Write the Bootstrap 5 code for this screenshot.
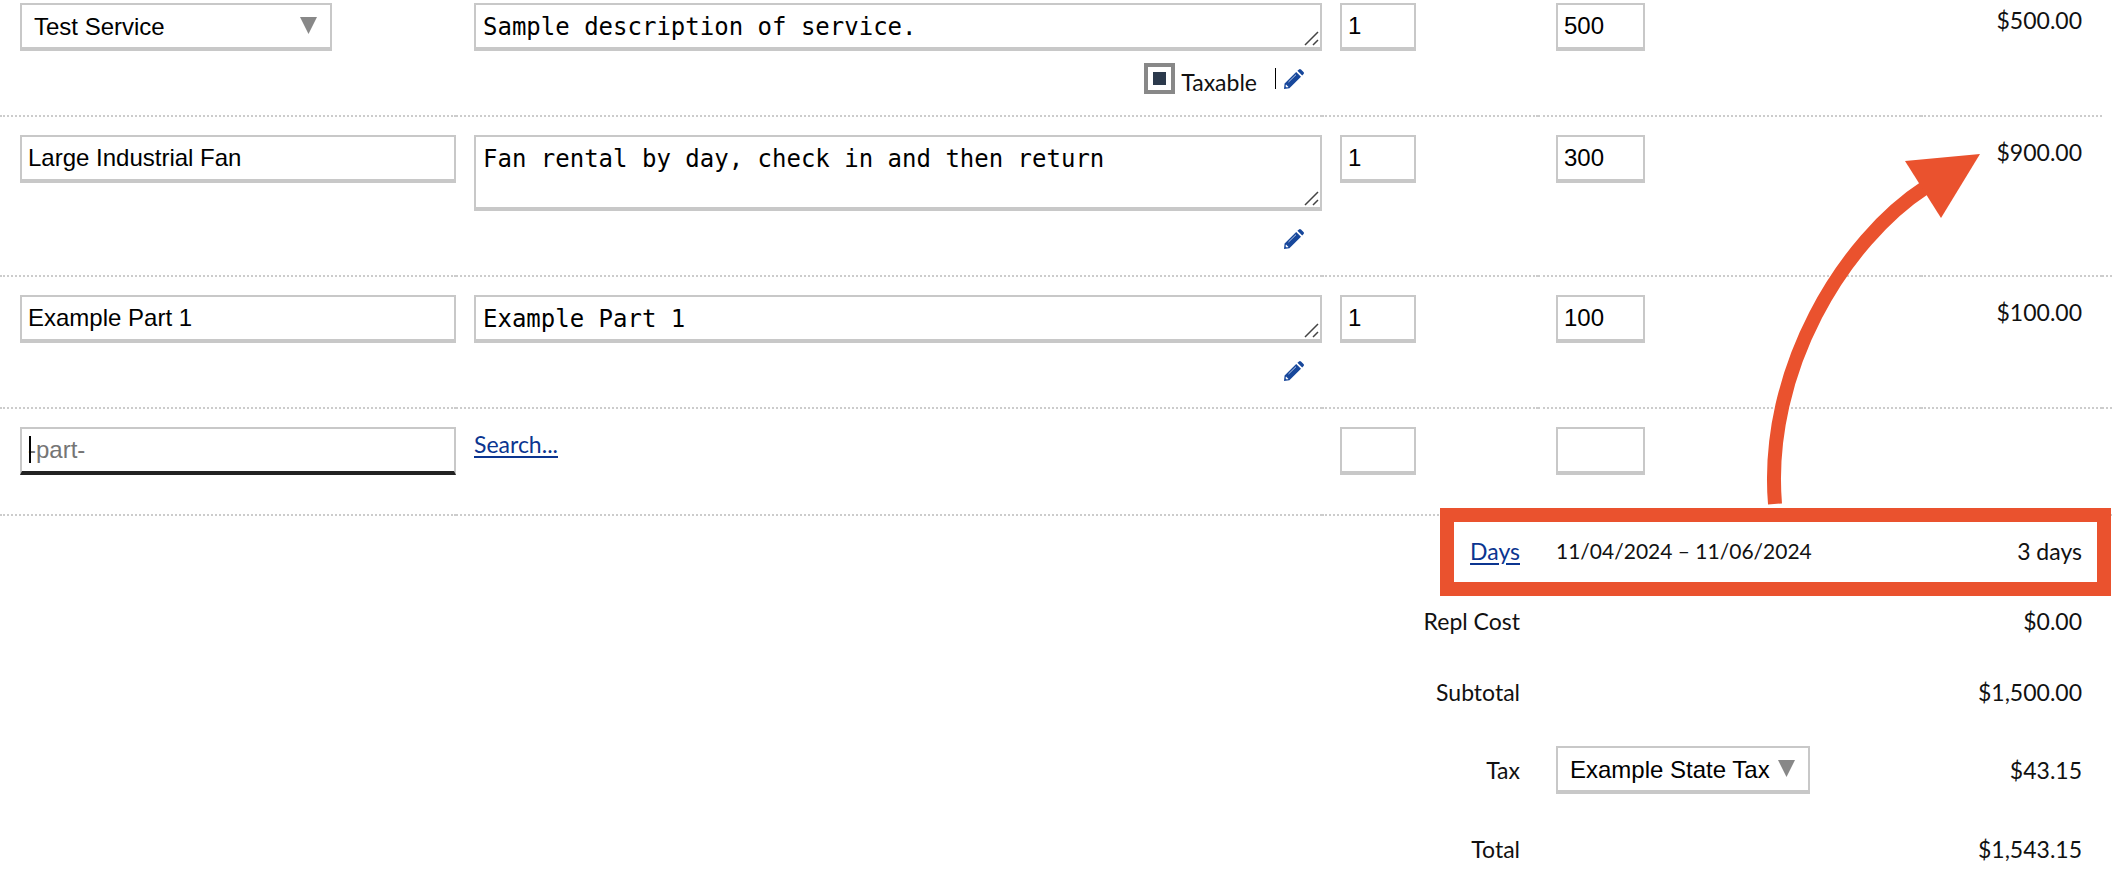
<!DOCTYPE html>
<html lang="en">
<head>
<meta charset="utf-8">
<meta name="viewport" content="width=device-width, initial-scale=1">
<title>Invoice line items</title>
<link href="https://cdn.jsdelivr.net/npm/bootstrap@5.3.0/dist/css/bootstrap.min.css" rel="stylesheet">
<style>
body { background: #fff; color: #111; font: 23px/34px Lato, "Open Sans", sans-serif; }
a { color: #0b3590; text-decoration: underline; text-decoration-thickness: 2px; text-underline-offset: 3px; }
.invoice { table-layout: fixed; border-collapse: collapse; }
.col-item { width: 456px; }
.col-qty { width: 216px; }
.col-price { width: 383px; }
.col-amount { width: 181px; }
.col-edge { width: 10px; }
.invoice td, .invoice th { vertical-align: top; font-weight: 400; padding: 18px 0 18px 18px; }
.invoice td:first-child { padding-left: 20px; }
.lines td { border-bottom: 2px dotted #ccc; padding-bottom: 21px; }
.lines tr:first-child td { padding-top: 3px; }
.lines .blank-line td { padding-bottom: 39px; }
.invoice .amount { text-align: right; padding-left: 0; padding-right: 20px; }
.invoice .edge { padding-left: 0; }
.invoice .period { font-size: 21px; }
.totals th { text-align: right; padding-right: 18px !important; }
.totals th, .totals td { height: 71px; }
.totals .tax-line > * { vertical-align: middle; padding-bottom: 20px; }
.totals .last-line > * { padding-bottom: 0; height: 52px; }

.field { border: 2px solid #c8c8c8; border-bottom-width: 4px; border-radius: 0; background-color: #fff; color: #000; font: 24px/28px "Liberation Sans", Arial, sans-serif; height: 48px; padding: 0 6px; }
.field::placeholder { color: #757575; opacity: 1; }
.field.focused { border-bottom: 4px solid #222; }
.qty { width: 76px; }
.price { width: 89px; }
textarea.field { display: block; height: auto; min-height: 48px; padding: 8px 6px 6px 7px; resize: none; overflow: hidden; font-family: "DejaVu Sans Mono", monospace;
  background: #fff url("data:image/svg+xml,%3Csvg xmlns='http://www.w3.org/2000/svg' width='16' height='16'%3E%3Cpath d='M1 14L14 1M9 14L14 9' stroke='%23444' stroke-width='1.5'/%3E%3C/svg%3E") no-repeat right bottom; }
select.field { appearance: none; padding-left: 12px; padding-top: 2px;
  background: #fff url("data:image/svg+xml,%3Csvg xmlns='http://www.w3.org/2000/svg' width='17' height='17'%3E%3Cpath d='M0 0H17L8.500 17z' fill='%23888'/%3E%3C/svg%3E") no-repeat right 13px top 12px; }
.service { width: 312px; }
.tax { width: 254px; }
.caret { left: 9px; top: 9px; width: 2px; height: 27px; background: #000; }

.actions { height: 31px; margin-top: 12px; padding-right: 18px; }
.actions label { padding-top: 6px; }
.tick { appearance: none; width: 31px; height: 31px; border: 4px solid #888; background: #fff; margin-right: 6px; }
.tick:checked { background: #fff linear-gradient(#2c3a4c, #2c3a4c) no-repeat center / 13px 13px; }
.divider { width: 1px; height: 21px; background: #000; margin: 0 8px 0 18px; }
.pencil { border: 0; background: none; padding: 0; width: 20px; height: 20px; display: flex; }
.callout { top: 0; right: 0; pointer-events: none; }
</style>
</head>
<body>
<svg class="d-none"><symbol id="pencil" viewBox="0 0 20 20">
  <path fill="#17479b" d="M13.400 1.800L15 .4Q16 -.3 17 .5L19.500 3Q20.400 4 19.600 5L18.200 6.600zM12.200 3L17 7.800 5.400 19.200 0 20 .6 14.400z"/>
  <path fill="#fff" d="M2 15.600L4.500 18 2.800 18.500 1.500 17.200z"/>
  <path fill="none" stroke="#b9c9e6" stroke-width="1" d="M4.500 13L12 5.700"/>
</symbol></svg>

<main class="position-relative">
<table class="invoice w-100">
  <colgroup><col class="col-item"><col><col class="col-qty"><col class="col-price"><col class="col-amount"><col class="col-edge"></colgroup>
  <tbody class="lines">
    <tr>
      <td><select class="field service d-block" aria-label="Service"><option>Test Service</option></select></td>
      <td>
        <textarea class="field w-100" rows="1" aria-label="Description">Sample description of service.</textarea>
        <div class="actions d-flex align-items-center justify-content-end">
          <input class="tick" type="checkbox" id="taxable" checked><label for="taxable">Taxable</label>
          <span class="divider"></span>
          <button class="pencil" type="button" aria-label="Edit"><svg width="20" height="20"><use href="#pencil"/></svg></button>
        </div>
      </td>
      <td><input class="field qty d-block" type="text" value="1" aria-label="Quantity"></td>
      <td><input class="field price d-block" type="text" value="500" aria-label="Price"></td>
      <td class="amount">$500.00</td>
    </tr>
    <tr>
      <td><input class="field w-100 d-block" type="text" value="Large Industrial Fan" aria-label="Part"></td>
      <td>
        <textarea class="field w-100" rows="2" aria-label="Description">Fan rental by day, check in and then return</textarea>
        <div class="actions d-flex align-items-center justify-content-end">
          <button class="pencil" type="button" aria-label="Edit"><svg width="20" height="20"><use href="#pencil"/></svg></button>
        </div>
      </td>
      <td><input class="field qty d-block" type="text" value="1" aria-label="Quantity"></td>
      <td><input class="field price d-block" type="text" value="300" aria-label="Price"></td>
      <td class="amount">$900.00</td>
      <td class="edge"></td>
    </tr>
    <tr>
      <td><input class="field w-100 d-block" type="text" value="Example Part 1" aria-label="Part"></td>
      <td>
        <textarea class="field w-100" rows="1" aria-label="Description">Example Part 1</textarea>
        <div class="actions d-flex align-items-center justify-content-end">
          <button class="pencil" type="button" aria-label="Edit"><svg width="20" height="20"><use href="#pencil"/></svg></button>
        </div>
      </td>
      <td><input class="field qty d-block" type="text" value="1" aria-label="Quantity"></td>
      <td><input class="field price d-block" type="text" value="100" aria-label="Price"></td>
      <td class="amount">$100.00</td>
      <td class="edge"></td>
    </tr>
    <tr class="blank-line">
      <td><div class="position-relative"><input class="field focused w-100 d-block" type="text" placeholder="-part-" aria-label="Part"><span class="caret position-absolute"></span></div></td>
      <td><a href="#">Search...</a></td>
      <td><input class="field qty d-block" type="text" aria-label="Quantity"></td>
      <td><input class="field price d-block" type="text" aria-label="Price"></td>
      <td class="amount"></td>
      <td class="edge"></td>
    </tr>
  </tbody>
  <tbody class="totals">
    <tr><td colspan="2"></td><th scope="row"><a href="#">Days</a></th><td class="period">11/04/2024 – 11/06/2024</td><td class="amount">3 days</td></tr>
    <tr><td colspan="2"></td><th scope="row">Repl Cost</th><td></td><td class="amount">$0.00</td></tr>
    <tr><td colspan="2"></td><th scope="row">Subtotal</th><td></td><td class="amount">$1,500.00</td></tr>
    <tr class="tax-line"><td colspan="2"></td><th scope="row"><label for="tax">Tax</label></th>
      <td><select class="field tax d-block" id="tax"><option>Example State Tax</option></select></td><td class="amount">$43.15</td></tr>
    <tr class="last-line"><td colspan="2"></td><th scope="row">Total</th><td></td><td class="amount">$1,543.15</td></tr>
  </tbody>
</table>

<!-- callout linking the rental days to the line amount; spans the fixed right-hand columns -->
<svg class="callout position-absolute" width="712" height="600" viewBox="1400 0 712 600" aria-hidden="true">
  <rect x="1447" y="515" width="657" height="74" fill="none" stroke="#ea522e" stroke-width="14"/>
  <path d="M1775 504C1764 370 1844 240 1926 187" fill="none" stroke="#ea522e" stroke-width="14"/>
  <path d="M1980 154L1905 161 1941 218z" fill="#ea522e"/>
</svg>
</main>
<script src="https://cdn.jsdelivr.net/npm/bootstrap@5.3.0/dist/js/bootstrap.bundle.min.js"></script>
</body>
</html>
